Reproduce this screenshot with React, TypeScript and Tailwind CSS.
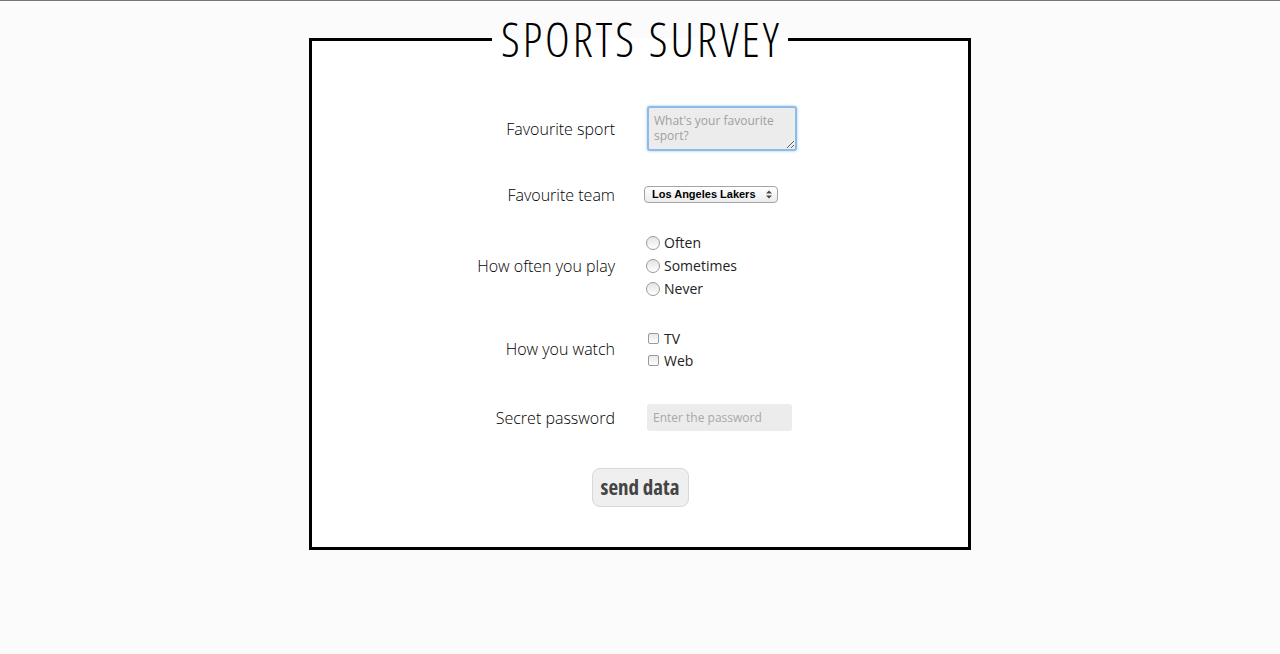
import React from 'react'

const label = "text-right text-[16px] font-light text-black font-['Open_Sans',sans-serif]"
const option = "flex items-center gap-[4px] text-[14px] text-[#222] font-['Open_Sans',sans-serif]"

export default function App(): JSX.Element {
  return (
    <div className="min-h-screen w-full bg-[#fbfbfb] border-t border-[#777] pt-[14px]">
      <fieldset className="w-[662px] mx-auto border-[3px] border-black bg-white pt-[42px] pb-[40px]">
        <legend className="mx-auto w-[296px] h-[49px] flex justify-center overflow-visible">
          <span className="inline-block whitespace-nowrap text-[47px] leading-[49px] font-light [font-stretch:75%] tracking-[3px] pl-[3px] text-black font-['Open_Sans',sans-serif]">
            SPORTS SURVEY
          </span>
        </legend>

        <div className="flex flex-col">
          <div className="grid grid-cols-[303px_1fr] gap-x-8 items-center h-[45px]">
            <span className={label}>Favourite sport</span>
            <textarea
              placeholder="What's your favourite sport?"
              className="w-[150px] h-[45px] bg-[#ececec] border-2 border-[#8fbbe9] rounded-[3px] shadow-[0_0_3px_#9cc4ee] px-[5px] py-[5px] text-[12px] leading-[15px] font-['Open_Sans',sans-serif] placeholder:text-[#9f9f9f] outline-none"
            />
          </div>

          <div className="grid grid-cols-[303px_1fr] gap-x-8 items-center h-[25px] mt-[31px]">
            <span className={label}>Favourite team</span>
            <div className="-ml-[3px] w-[134px] h-[17px] flex items-center justify-between rounded-[4px] border border-[#a4a4a4] bg-gradient-to-b from-white to-[#ececec] pl-[7px] pr-[5px]">
              <span className="whitespace-nowrap text-[11px] leading-[15px] font-bold text-black font-['Liberation_Sans',sans-serif]">Los Angeles Lakers</span>
              <svg width="6" height="9" viewBox="0 0 6 9">
                <path d="M0 3.5 L3 0.5 L6 3.5Z" fill="#444" />
                <path d="M0 5.5 L3 8.5 L6 5.5Z" fill="#444" />
              </svg>
            </div>
          </div>

          <div className="grid grid-cols-[303px_1fr] gap-x-8 items-center h-[69px] mt-[24px]">
            <span className={label}>How often you play</span>
            <div className="flex flex-col">
              {['Often', 'Sometimes', 'Never'].map((o) => (
                <label key={o} className={option + ' h-[23px]'}>
                  <span className="-ml-[1px] w-[14px] h-[14px] rounded-full border border-[#9a9a9a] bg-gradient-to-b from-[#e4e4e4] to-white" />
                  {o}
                </label>
              ))}
            </div>
          </div>

          <div className="grid grid-cols-[303px_1fr] gap-x-8 items-center h-[44px] mt-[27px]">
            <span className={label}>How you watch</span>
            <div className="flex flex-col">
              {['TV', 'Web'].map((o) => (
                <label key={o} className={option + ' h-[22px] gap-[5px]'}>
                  <span className="ml-[1px] w-[11px] h-[11px] rounded-[2px] border border-[#9a9a9a] bg-gradient-to-b from-[#e8e8e8] to-white" />
                  {o}
                </label>
              ))}
            </div>
          </div>

          <div className="grid grid-cols-[303px_1fr] gap-x-8 items-center h-[27px] mt-[33px]">
            <span className={label}>Secret password</span>
            <input
              type="password"
              placeholder="Enter the password"
              className="w-[145px] h-[27px] bg-[#ececec] rounded-[3px] px-[6px] text-[12px] font-['Open_Sans',sans-serif] placeholder:text-[#a8a8a8] outline-none"
            />
          </div>

          <div className="flex justify-center mt-[37px]">
            <button className="w-[97px] h-[39px] rounded-[8px] border border-[#d8d8d8] bg-[#efefef] whitespace-nowrap text-[21px] font-bold [font-stretch:75%] text-[#444] font-['Open_Sans',sans-serif]">
              send data
            </button>
          </div>
        </div>
      </fieldset>
    </div>
  )
}
